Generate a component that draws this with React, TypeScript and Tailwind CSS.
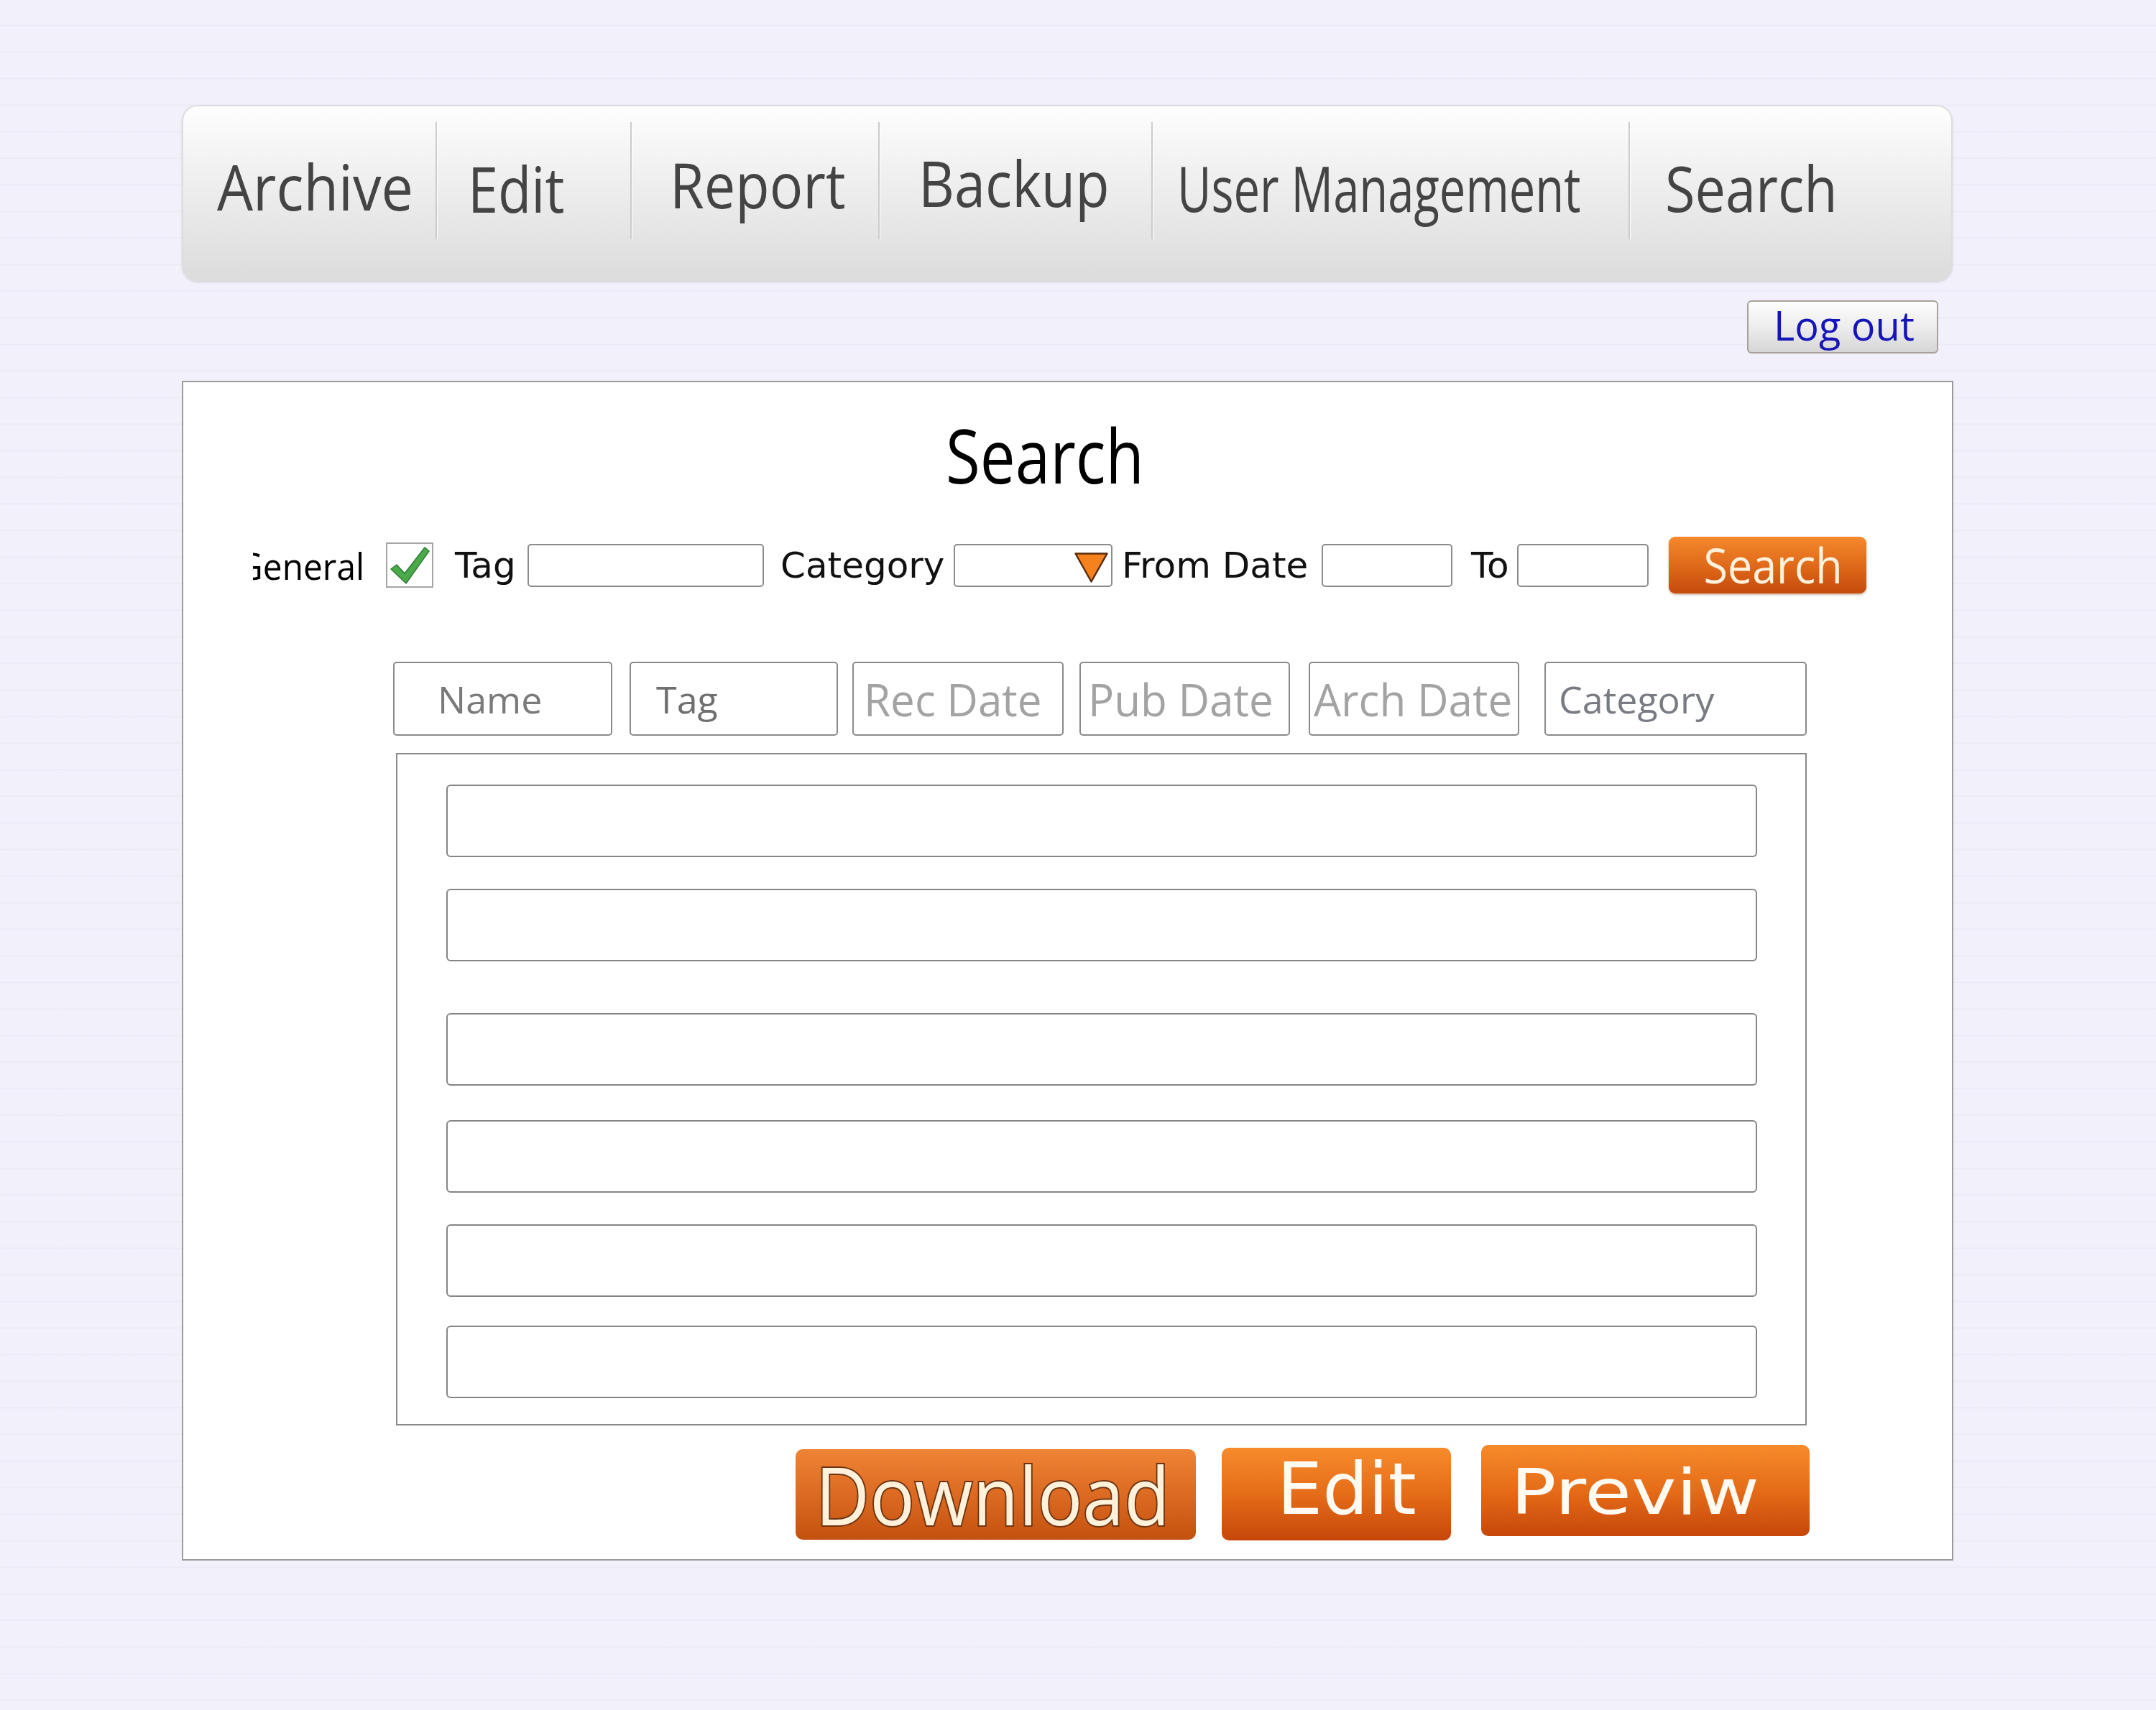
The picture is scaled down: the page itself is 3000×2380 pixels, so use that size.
import React from "react";

function Divider() {
  return <div className="w-[2px] h-[163px] mt-[22px] bg-[#cbcbcb] shadow-[1px_0_0_#ffffff] shrink-0" />;
}

function CheckIcon() {
  return (
    <svg width="66" height="63" viewBox="0 0 66 63">
      <path d="M7 37 L15 31 L26 43 L54 7 L60 12 L28 57 Z" fill="#4aaa4a" stroke="#2f7d34" strokeWidth="1.5" strokeLinejoin="round" />
    </svg>
  );
}

function Triangle() {
  return (
    <svg width="47" height="42" viewBox="0 0 47 42">
      <polygon points="1.5,1.5 45.5,1.5 23.5,40.5" fill="#f5821f" stroke="#5a2c0c" strokeWidth="2.5" strokeLinejoin="round" />
    </svg>
  );
}

export default function App() {
  return (
    <div className="w-[3000px] h-[2380px] overflow-hidden bg-[#f1f0fb] bg-[repeating-linear-gradient(to_bottom,#f2f1fb_0px,#f2f1fb_34px,#e9e8f4_35px,#f2f1fb_37px)] font-['Open_Sans',sans-serif]">
      <div className="pl-[253px] pt-[146px]">
        {/* Nav bar */}
        <nav className="w-[2464px] h-[245px] flex rounded-[22px] border-2 border-[#dddddd] bg-[linear-gradient(to_bottom,#fefefe,#f3f3f3_30%,#dcdcdc)] shadow-[0_2px_3px_rgba(0,0,0,0.12)] text-[#444444] text-[88px] leading-none whitespace-nowrap">
          <div className="w-[351px] shrink-0 pl-[47px] pt-[67px]">
            <span className="inline-block origin-left scale-x-[0.9]">Archive</span>
          </div>
          <Divider />
          <div className="w-[269px] shrink-0 pl-[43px] pt-[70px]">
            <span className="inline-block origin-left scale-x-[0.86]">Edit</span>
          </div>
          <Divider />
          <div className="w-[343px] shrink-0 pl-[53px] pt-[64px]">
            <span className="inline-block origin-left scale-x-[0.88]">Report</span>
          </div>
          <Divider />
          <div className="w-[378px] shrink-0 pl-[54px] pt-[62px]">
            <span className="inline-block origin-left scale-x-[0.88]">Backup</span>
          </div>
          <Divider />
          <div className="w-[662px] shrink-0 pl-[34px] pt-[69px]">
            <span className="inline-block origin-left scale-x-[0.74]">User Management</span>
          </div>
          <Divider />
          <div className="flex-1 pl-[49px] pt-[69px]">
            <span className="inline-block origin-left scale-x-[0.86]">Search</span>
          </div>
        </nav>

        {/* Log out */}
        <div className="w-[2465px] flex justify-end pr-[21px] mt-[27px]">
          <button className="w-[266px] h-[74px] flex items-start pl-[35px] pt-[4px] rounded-[6px] border-2 border-[#a8a09a] bg-[linear-gradient(to_bottom,#fdfdfd,#ededed_50%,#d6d6d6)] text-[#1515b8] text-[56px] leading-none whitespace-nowrap">
            Log out
          </button>
        </div>

        {/* Main panel */}
        <main className="mt-[38px] w-[2465px] h-[1642px] border-2 border-[#9a9a9a] bg-white">
          {/* Title */}
          <div className="pt-[48px] pl-[1061px] h-[153px] text-[105px] leading-none text-black whitespace-nowrap">
            <span className="inline-block origin-left scale-x-[0.83]">Search</span>
          </div>

          {/* Search row */}
          <div className="mt-[62px] h-[79px] flex items-center whitespace-nowrap">
            <div className="ml-[97px] w-[158px] overflow-hidden text-[52px] leading-none text-black shrink-0">
              <span className="inline-block origin-left -ml-[21px] scale-x-[0.92]">General</span>
            </div>
            <div className="ml-[27px] w-[66px] h-[63px] border-2 border-[#a5a5a5] bg-white shrink-0">
              <div className="-m-[2px]">
                <CheckIcon />
              </div>
            </div>
            <div className="ml-[30px] w-[86px] font-['DejaVu_Sans',sans-serif] text-[50px] leading-none text-[#111111]">Tag</div>
            <div className="ml-[15px] w-[329px] h-[60px] rounded-[5px] border-2 border-[#8c8c8c] bg-white shrink-0" />
            <div className="ml-[23px] w-[225px] font-['DejaVu_Sans',sans-serif] text-[50px] leading-none text-[#111111]">Category</div>
            <div className="ml-[16px] w-[221px] h-[60px] rounded-[5px] border-2 border-[#8c8c8c] bg-white shrink-0 flex justify-end items-start pr-[4px] pt-[10px]">
              <Triangle />
            </div>
            <div className="ml-[13px] w-[261px] font-['DejaVu_Sans',sans-serif] text-[50px] leading-none text-[#111111]">From Date</div>
            <div className="ml-[17px] w-[182px] h-[60px] rounded-[5px] border-2 border-[#8c8c8c] bg-white shrink-0" />
            <div className="ml-[26px] w-[53px] font-['DejaVu_Sans',sans-serif] text-[50px] leading-none text-[#111111]">To</div>
            <div className="ml-[11px] w-[183px] h-[60px] rounded-[5px] border-2 border-[#8c8c8c] bg-white shrink-0" />
            <button className="ml-[28px] w-[275px] h-[79px] shrink-0 rounded-[9px] bg-[linear-gradient(to_bottom,#f5892c,#e06a1a_50%,#c44a0c)] shadow-[0_2px_3px_rgba(120,50,0,0.35)] flex items-center justify-center pl-[16px] text-[67px] leading-none text-[#fff1dc]">
              <span className="inline-block scale-x-[0.91]">Search</span>
            </button>
          </div>

          {/* Column headers */}
          <div className="mt-[95px] h-[103px] flex whitespace-nowrap">
            <div className="ml-[292px] w-[305px] h-[103px] rounded-[5px] border-2 border-[#8a8a8a] flex items-center pl-[60px] text-[52px] leading-none text-[#7a7a7a]">Name</div>
            <div className="ml-[24px] w-[290px] h-[103px] rounded-[5px] border-2 border-[#8a8a8a] flex items-center pl-[35px] text-[52px] leading-none text-[#6f6f6f]">Tag</div>
            <div className="ml-[20px] w-[294px] h-[103px] rounded-[5px] border-2 border-[#8a8a8a] flex items-center pl-[14px] text-[62px] leading-none text-[#a3a3a3]">
              <span className="inline-block origin-left scale-x-[0.97]">Rec Date</span>
            </div>
            <div className="ml-[22px] w-[293px] h-[103px] rounded-[5px] border-2 border-[#8a8a8a] flex items-center pl-[10px] text-[62px] leading-none text-[#a3a3a3]">
              <span className="inline-block origin-left scale-x-[0.97]">Pub Date</span>
            </div>
            <div className="ml-[26px] w-[293px] h-[103px] rounded-[5px] border-2 border-[#8a8a8a] flex items-center pl-[5px] text-[62px] leading-none text-[#a3a3a3]">
              <span className="inline-block origin-left scale-x-[0.97]">Arch Date</span>
            </div>
            <div className="ml-[35px] w-[365px] h-[103px] rounded-[5px] border-2 border-[#8a8a8a] flex items-center pl-[18px] text-[52px] leading-none text-[#787c82]">Category</div>
          </div>

          {/* Results box */}
          <div className="mt-[24px] ml-[296px] w-[1963px] h-[936px] border-2 border-[#8a8a8a] bg-white">
            <div className="ml-[68px] mt-[42px] w-[1824px] h-[101px] rounded-[6px] border-2 border-[#858585]" />
            <div className="ml-[68px] mt-[44px] w-[1824px] h-[101px] rounded-[6px] border-2 border-[#858585]" />
            <div className="ml-[68px] mt-[72px] w-[1824px] h-[101px] rounded-[6px] border-2 border-[#858585]" />
            <div className="ml-[68px] mt-[48px] w-[1824px] h-[101px] rounded-[6px] border-2 border-[#858585]" />
            <div className="ml-[68px] mt-[44px] w-[1824px] h-[101px] rounded-[6px] border-2 border-[#858585]" />
            <div className="ml-[68px] mt-[40px] w-[1824px] h-[101px] rounded-[6px] border-2 border-[#858585]" />
          </div>

          {/* Action buttons */}
          <div className="mt-[27px] flex items-start whitespace-nowrap">
            <button className="ml-[852px] mt-[6px] w-[557px] h-[126px] rounded-[10px] bg-[linear-gradient(to_bottom,#ef8435,#dc6a22_50%,#c4520f)] flex items-center justify-center pr-[8px] text-[112px] leading-none text-[#fff1da] [-webkit-text-stroke:4px_#6e3412] [paint-order:stroke_fill]">
              <span className="inline-block scale-x-[0.93]">Download</span>
            </button>
            <button className="ml-[36px] mt-[4px] w-[319px] h-[129px] rounded-[10px] bg-[linear-gradient(to_bottom,#f78b2b,#e56c18_50%,#c6470a)] flex items-start pl-[77px] pt-[8px] font-['DejaVu_Sans',sans-serif] text-[100px] leading-none text-[#fffaf2]">
              Edit
            </button>
            <button className="ml-[42px] w-[457px] h-[127px] rounded-[10px] bg-[linear-gradient(to_bottom,#f78b2b,#e56c18_50%,#c6470a)] flex items-start pl-[41px] pt-[22px] font-['DejaVu_Sans',sans-serif] text-[88px] leading-none text-[#fffaf2]">
              <span className="inline-block origin-left scale-x-[1.2]">Previw</span>
            </button>
          </div>
        </main>
      </div>
    </div>
  );
}
